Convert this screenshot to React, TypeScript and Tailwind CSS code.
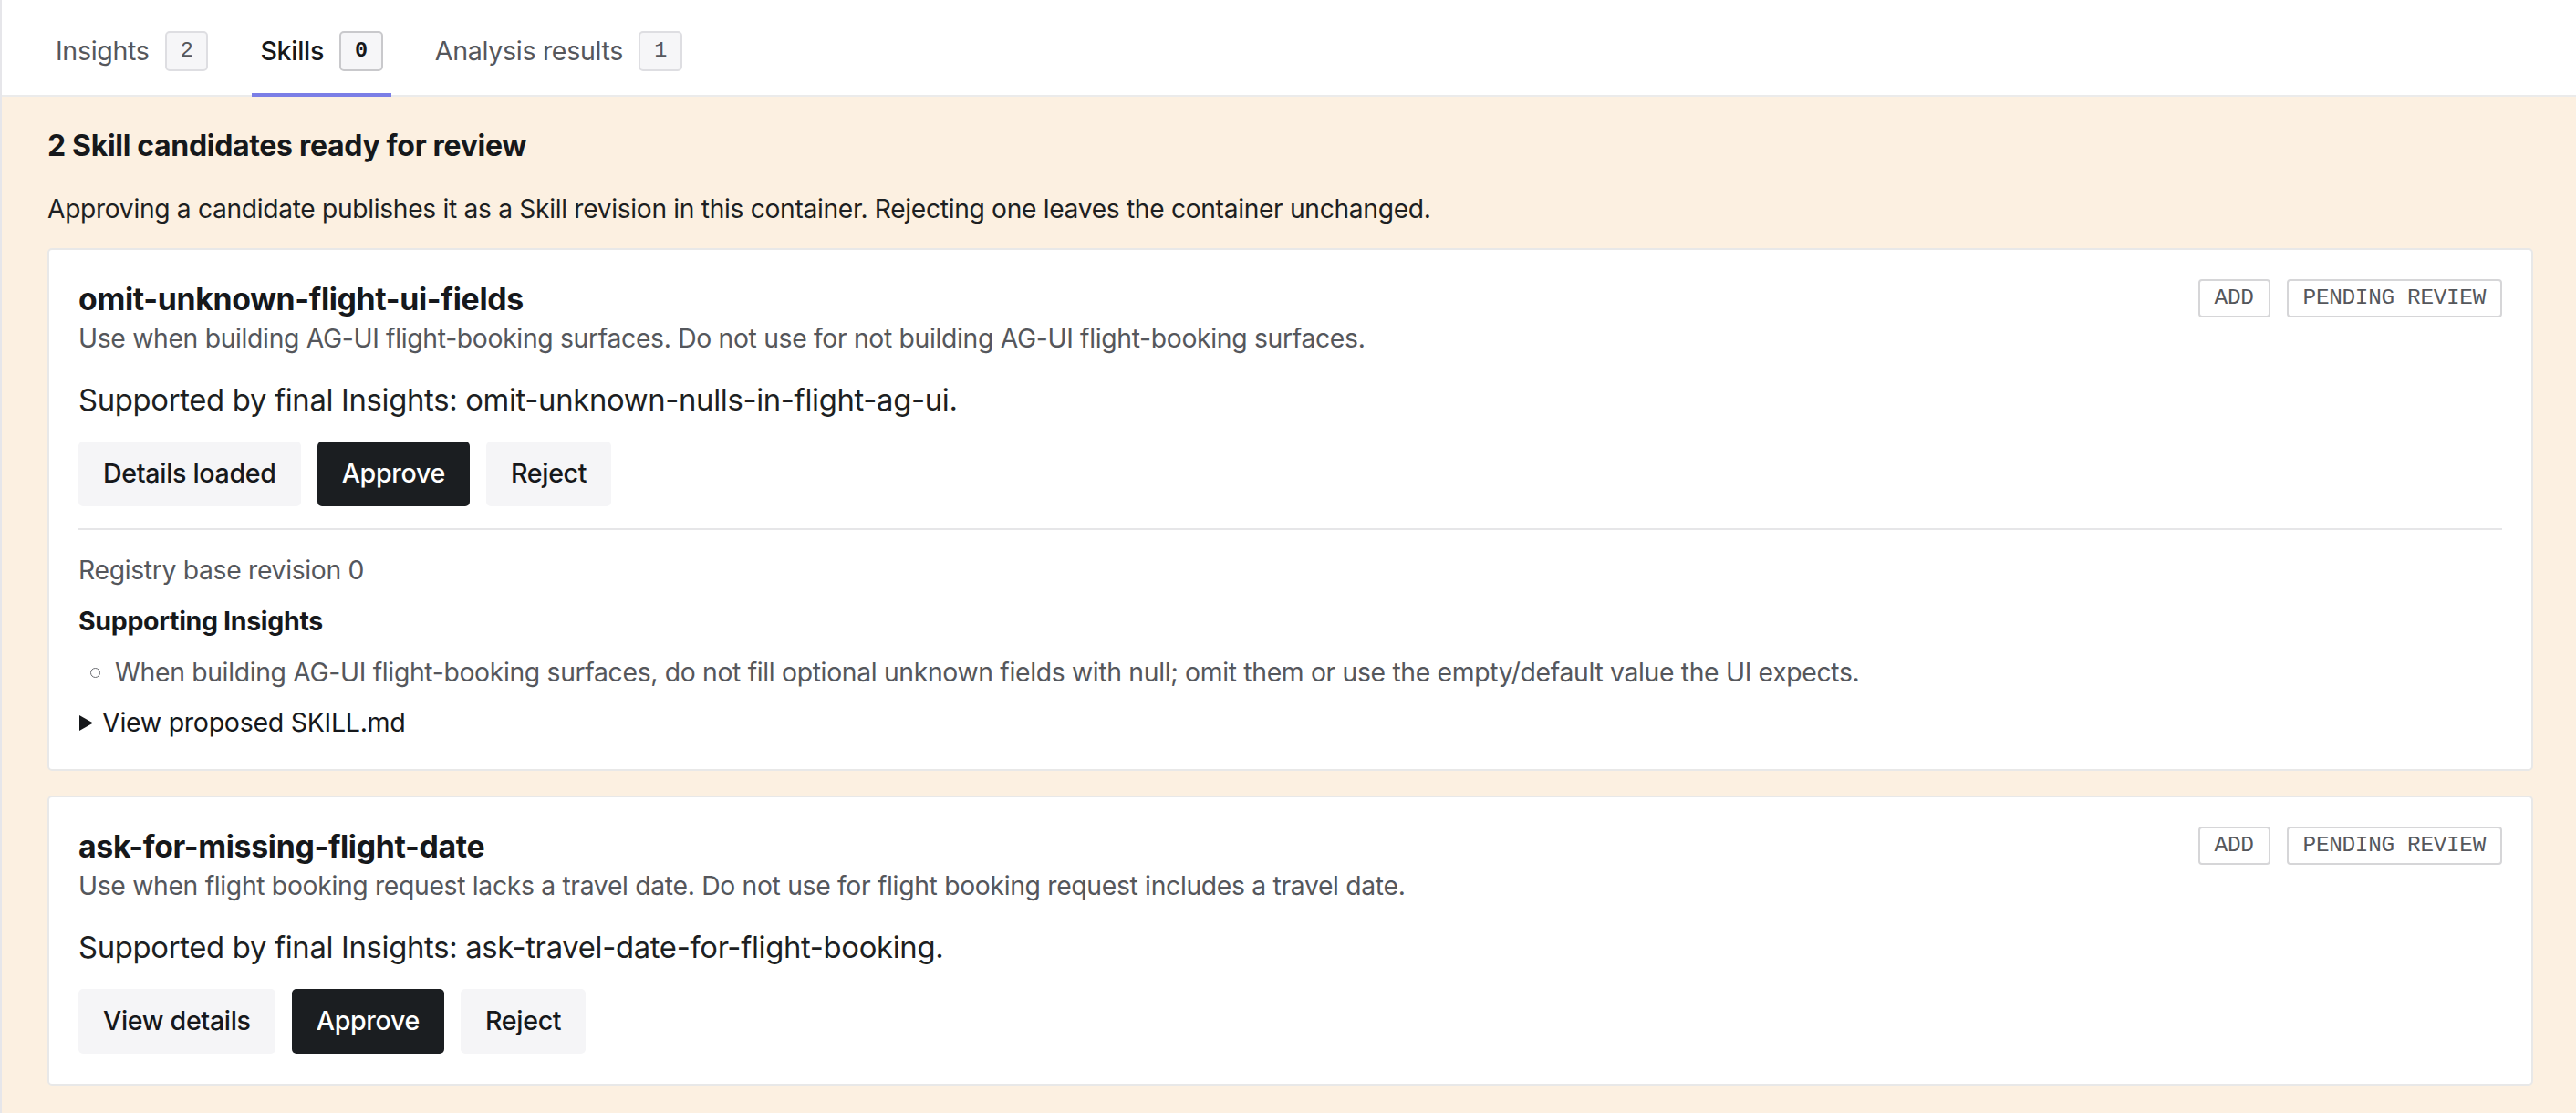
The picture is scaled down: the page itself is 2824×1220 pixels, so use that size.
import React from "react";

type Candidate = {
  name: string;
  summary: string;
  insight: string;
  detailsLabel: string;
  expanded: boolean;
};

const candidates: Candidate[] = [
  {
    name: "omit-unknown-flight-ui-fields",
    summary:
      "Use when building AG-UI flight-booking surfaces. Do not use for not building AG-UI flight-booking surfaces.",
    insight: "omit-unknown-nulls-in-flight-ag-ui",
    detailsLabel: "Details loaded",
    expanded: true,
  },
  {
    name: "ask-for-missing-flight-date",
    summary:
      "Use when flight booking request lacks a travel date. Do not use for flight booking request includes a travel date.",
    insight: "ask-travel-date-for-flight-booking",
    detailsLabel: "View details",
    expanded: false,
  },
];

function Tab({ label, count, active }: { label: string; count: number; active?: boolean }) {
  return (
    <div className="relative flex items-center gap-[17px] px-[9px] pt-[8px]">
      <span className={active ? "text-[28.6px] font-medium text-[#16181b]" : "text-[28.6px] text-[#55575c]"}>
        {label}
      </span>
      <span
        className={
          "flex h-[44px] items-center rounded-[5px] border-2 bg-[#f6f6f8] px-[15px] font-['Liberation_Mono',monospace] text-[23.5px] " +
          (active ? "border-[#c9c9cc] font-bold text-[#16181b]" : "border-[#dedee2] text-[#55575c]")
        }
      >
        {count}
      </span>
      {active && <div className="absolute bottom-[-2px] left-0 right-0 h-[4px] bg-[#7b7ee6]" />}
    </div>
  );
}

function Tag({ children }: { children: React.ReactNode }) {
  return (
    <span className="flex h-[42px] items-center rounded-[4px] border-2 border-[#d6d6d8] px-[16px] font-['Liberation_Mono',monospace] text-[24.4px] text-[#55575c]">
      {children}
    </span>
  );
}

function Button({ children, primary }: { children: React.ReactNode; primary?: boolean }) {
  return (
    <button
      className={
        "h-[71px] rounded-[5px] px-[27px] text-[28.6px] font-medium " +
        (primary ? "bg-[#1b1e21] text-white" : "bg-[#f5f5f7] text-[#16181b]")
      }
    >
      {children}
    </button>
  );
}

function CandidateCard({ c }: { c: Candidate }) {
  return (
    <div className="rounded-[5px] border-2 border-[#e8e8e8] bg-white px-[32px] pb-[33px] pt-[32px]">
      <div className="flex items-start justify-between">
        <div>
          <div className="text-[33.8px] font-bold leading-[44px] text-[#16181b]">{c.name}</div>
          <div className="mt-[2px] text-[28.3px] leading-[38px] text-[#55575c]">{c.summary}</div>
        </div>
        <div className="flex gap-[18px]">
          <Tag>ADD</Tag>
          <Tag>PENDING REVIEW</Tag>
        </div>
      </div>
      <div className="mt-[28px] text-[32.8px] leading-[40px] text-[#1d1f22]">
        Supported by final Insights: {c.insight}.
      </div>
      <div className="mt-[26px] flex gap-[18px]">
        <Button>{c.detailsLabel}</Button>
        <Button primary>Approve</Button>
        <Button>Reject</Button>
      </div>
      {c.expanded && (
        <>
          <div className="mt-[24px] h-[2px] bg-[#e6e6e8]" />
          <div className="mt-[26px] text-[28.3px] leading-[36px] text-[#55575c]">Registry base revision 0</div>
          <div className="mt-[20px] text-[28.5px] font-bold leading-[36px] text-[#16181b]">Supporting Insights</div>
          <ul className="mt-[20px]">
            <li className="flex items-center text-[28.3px] leading-[36px] text-[#55575c]">
              <span className="ml-[13px] mr-[16px] h-[11px] w-[11px] shrink-0 rounded-full border-[1.5px] border-[#6b6d72]" />
              When building AG-UI flight-booking surfaces, do not fill optional unknown fields with null; omit them or use
              the empty/default value the UI expects.
            </li>
          </ul>
          <div className="mt-[19px] flex items-center gap-[10px] text-[28.6px] leading-[36px] text-[#16181b]">
            <svg width="15" height="17" viewBox="0 0 15 17" className="ml-[1px]">
              <polygon points="0,0 15,8.5 0,17" fill="#16181b" />
            </svg>
            <span>View proposed SKILL.md</span>
          </div>
        </>
      )}
    </div>
  );
}

export default function App() {
  return (
    <div className="min-h-screen border-l-2 border-[#e6e6ea] bg-white font-['Inter',sans-serif] tracking-[-0.02em]">
      <div className="flex h-[106px] gap-[39px] border-b-2 border-[#ebebeb] pl-[50px]">
        <Tab label="Insights" count={2} />
        <Tab label="Skills" count={0} active />
        <Tab label="Analysis results" count={1} />
      </div>
      <div className="min-h-[1114px] bg-[#fcf0e1] pb-[31px] pl-[50px] pr-[47px] pt-[34px]">
        <h2 className="text-[32px] font-bold leading-[40px] text-[#16181b]">2 Skill candidates ready for review</h2>
        <p className="mt-[31px] text-[28.2px] leading-[36px] text-[#1d1f22]">
          Approving a candidate publishes it as a Skill revision in this container. Rejecting one leaves the container
          unchanged.
        </p>
        <div className="mt-[25px] flex flex-col gap-[27px]">
          {candidates.map((c) => (
            <CandidateCard key={c.name} c={c} />
          ))}
        </div>
      </div>
    </div>
  );
}
